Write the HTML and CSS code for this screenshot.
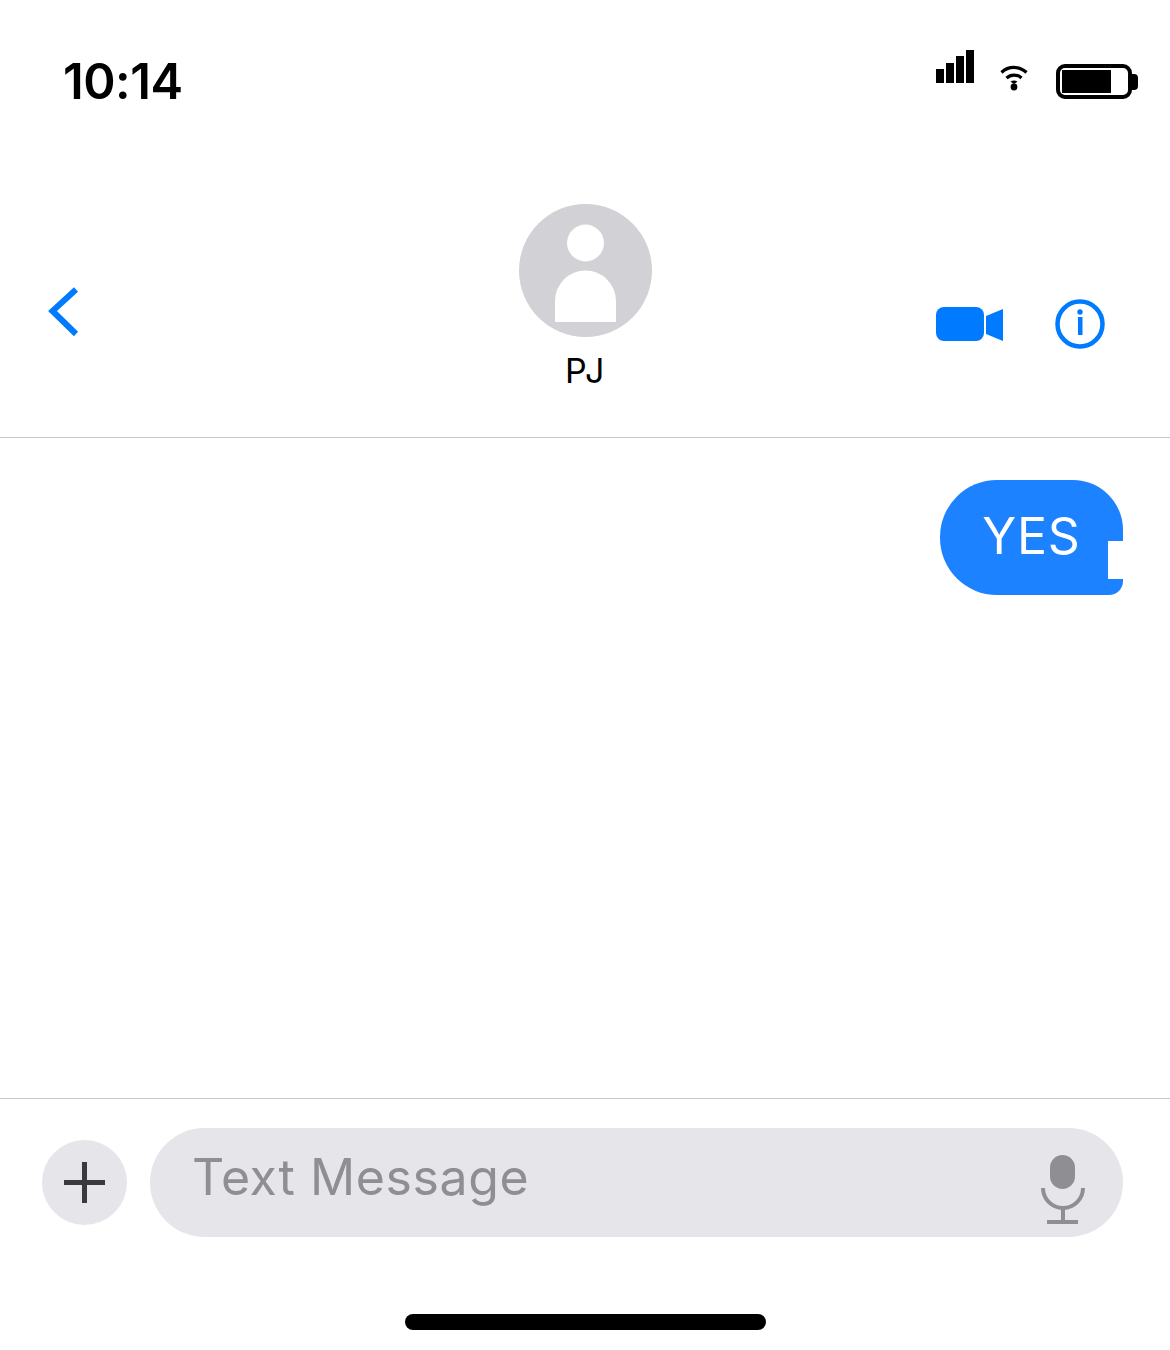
FILE: index.html
```html
<!DOCTYPE html>
<html lang="en">
<head>
<meta charset="utf-8">
<title>Messages</title>
<link rel="stylesheet" href="styles.css">
</head>
<body>
<main class="screen">
  <div class="status">
    <span class="time">10:14</span>
    <div class="status-icons">
      <svg class="signal" width="38" height="33" viewBox="0 0 38 33"><path fill="#000" d="M0 19h8v14H0zM10 13h8v20h-8zM20 6h8v27h-8zM30 0h8v33h-8z"/></svg>
      <svg class="wifi" width="28" height="26" viewBox="0 0 28 26"><g fill="none" stroke="#000" stroke-width="3.2"><path d="M1.500 7.500a18 18 0 0 1 25 0"/><path d="M6.500 13a11 11 0 0 1 15 0"/></g><path fill="#000" d="M10.500 16.800a6 6 0 0 1 7 0L14 19z"/><circle cx="14" cy="22" r="3.400" fill="#000"/></svg>
      <svg class="battery" width="83" height="36" viewBox="0 0 83 36"><rect x="2" y="2" width="72" height="31" rx="7" fill="none" stroke="#000" stroke-width="4"/><rect x="6" y="6" width="49" height="23" fill="#000"/><path fill="#000" d="M75 10h3a4 4 0 0 1 4 4v8a4 4 0 0 1-4 4h-3z"/></svg>
    </div>
  </div>

  <header class="nav">
    <svg class="back" width="32" height="52" viewBox="0 0 32 52"><path d="M28 3.500 4.500 25l23.500 23" fill="none" stroke="#007aff" stroke-width="6"/></svg>
    <div class="contact">
      <svg class="avatar" width="133" height="133" viewBox="0 0 133 133"><circle cx="66.500" cy="66.500" r="66.500" fill="#d1d1d6"/><circle cx="66.500" cy="39" r="18.500" fill="#fff"/><path fill="#fff" d="M36 118V97a30.500 30.500 0 0 1 61 0v21z"/></svg>
      <span class="name">PJ</span>
    </div>
    <div class="nav-actions">
      <svg width="68" height="36" viewBox="0 0 68 36"><rect x="0" y="1" width="48" height="34" rx="8" fill="#007aff"/><path fill="#007aff" d="M50 10l17-7v32l-17-7z"/></svg>
      <svg width="50" height="50" viewBox="0 0 50 50"><circle cx="25" cy="25" r="22.500" fill="none" stroke="#007aff" stroke-width="4.500"/><circle cx="25" cy="13" r="2.700" fill="#007aff"/><rect x="23" y="18" width="4.500" height="18" fill="#007aff"/></svg>
    </div>
  </header>

  <section class="thread">
    <div class="bubble">YES<span class="notch"></span></div>
  </section>

  <footer class="composer">
    <div class="plus">
      <svg width="42" height="42" viewBox="0 0 42 42"><path d="M20.500 0v41M0 20.500h41" stroke="#3a3a3c" stroke-width="5" fill="none"/></svg>
    </div>
    <div class="field">
      <span class="placeholder">Text Message</span>
      <svg class="mic" width="44" height="70" viewBox="0 0 44 70"><rect x="9" y="0" width="25" height="34" rx="12.500" fill="#8e8e93"/><path d="M2 33a20 20 0 0 0 40 0" fill="none" stroke="#8e8e93" stroke-width="4"/><rect x="20" y="53" width="4" height="13" fill="#8e8e93"/><rect x="6" y="65" width="31" height="4" fill="#8e8e93"/></svg>
    </div>
  </footer>

  <div class="home-bar"><span class="home-indicator"></span></div>
</main>
</body>
</html>
```

FILE: styles.css
```css
* { box-sizing: border-box; }
html, body { margin: 0; padding: 0; background: #fff; }
body { font-family: Inter, "Liberation Sans", sans-serif; color: #000; font-optical-sizing: none; }
svg { display: block; flex: none; }

.screen {
  width: 1170px;
  height: 1350px;
  display: flex;
  flex-direction: column;
  overflow: hidden;
}

.status {
  height: 130px;
  flex: none;
  display: flex;
  justify-content: space-between;
  align-items: flex-start;
  padding: 51px 31px 0 63px;
}
.time {
  font-size: 49px;
  line-height: 60px;
  font-weight: 600;
  letter-spacing: -0.500px;
  padding-top: 1px;
}
.status-icons {
  display: flex;
  align-items: flex-start;
  margin-top: -1px;
}
.wifi { margin: 15px 0 0 26px; }
.battery { margin: 14px 0 0 28px; }

.nav {
  height: 308px;
  flex: none;
  border-bottom: 1px solid #c8c8cc;
  display: grid;
  grid-template-columns: 1fr auto 1fr;
  align-items: start;
  padding: 74px 48px 0 48px;
}
.back { margin-top: 82px; }
.contact {
  display: flex;
  flex-direction: column;
  align-items: center;
  margin-left: 1px;
}
.name {
  font-size: 34px;
  line-height: 40px;
  margin-top: 14px;
  letter-spacing: 1.500px;
}
.nav-actions {
  justify-self: end;
  display: flex;
  align-items: center;
  gap: 51px;
  margin: 95px 17px 0 0;
}

.thread {
  flex: 1;
  display: flex;
  justify-content: flex-end;
  align-items: flex-start;
  padding: 42px 47px 0 0;
}
.bubble {
  position: relative;
  width: 183px;
  height: 115px;
  background: #1c82ff;
  color: #fff;
  border-radius: 57px 50px 14px 57px;
  display: flex;
  align-items: center;
  justify-content: center;
  font-size: 50px;
  font-weight: 380;
  letter-spacing: 0.800px;
  padding-bottom: 4px;
}
.notch {
  position: absolute;
  right: 0;
  top: 61px;
  width: 15px;
  height: 38px;
  background: #fff;
}

.composer {
  flex: none;
  height: 170px;
  border-top: 1px solid #c8c8cc;
  display: flex;
  align-items: flex-start;
  padding: 29px 47px 0 42px;
  gap: 23px;
}
.plus {
  width: 85px;
  height: 85px;
  margin-top: 12px;
  border-radius: 50%;
  background: #e5e5ea;
  display: flex;
  align-items: center;
  justify-content: center;
  flex: none;
}
.field {
  flex: 1;
  height: 109px;
  border-radius: 54.500px;
  background: #e5e5ea;
  display: flex;
  align-items: flex-start;
  justify-content: space-between;
  padding: 0 38px 0 42px;
}
.placeholder {
  font-size: 50px;
  line-height: 98px;
  color: #8e8e93;
  letter-spacing: 0.600px;
}
.mic { margin-top: 27px; }

.home-bar {
  flex: none;
  height: 82px;
  display: flex;
  justify-content: center;
  padding-top: 46px;
}
.home-indicator {
  display: block;
  width: 361px;
  height: 16px;
  border-radius: 8px;
  background: #000;
}
```
